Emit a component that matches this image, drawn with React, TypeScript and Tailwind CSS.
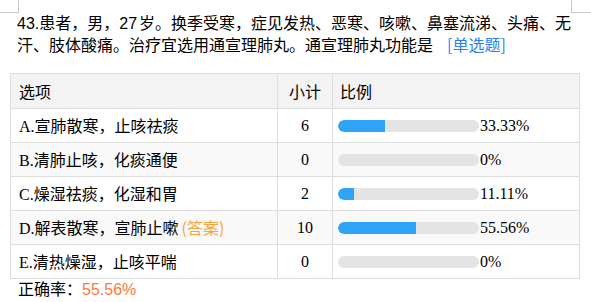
const rows = [
  { label: 'A.', text: '宣肺散寒，止咳祛痰', count: 6, pct: 33.33, answer: false },
  { label: 'B.', text: '清肺止咳，化痰通便', count: 0, pct: 0, answer: false },
  { label: 'C.', text: '燥湿祛痰，化湿和胃', count: 2, pct: 11.11, answer: false },
  { label: 'D.', text: '解表散寒，宣肺止嗽', count: 10, pct: 55.56, answer: true },
  { label: 'E.', text: '清热燥湿，止咳平喘', count: 0, pct: 0, answer: false },
];

const serif = "font-['Liberation_Serif','Noto_Sans_CJK_SC',serif]";
const cjk = "font-['Noto_Sans_CJK_SC','Liberation_Sans',sans-serif]";

export default function App() {
  return (
    <div className={`relative w-[591px] h-[302px] overflow-hidden bg-white text-black ${cjk}`}>
      {/* page corner marks */}
      <div className="absolute left-0 top-0 w-[19px] h-[13px] border-r border-b border-[#c8c8c8]" />
      <div className="absolute right-0 top-0 w-[20px] h-[13px] border-l border-b border-[#c8c8c8]" />

      <p className="pl-[17px] pt-[12px] w-[574px] text-[16px] leading-[21px]">
        <span className="font-['Liberation_Sans',sans-serif]">43.</span>患者，男，
        <span className="font-['Liberation_Sans',sans-serif] mr-[2px]">27</span>岁。换季受寒，症见发热、恶寒、咳嗽、鼻塞流涕、头痛、无汗、肢体酸痛。治疗宜选用通宣理肺丸。通宣理肺丸功能是
        <span className="ml-[14px] text-[#2a7ff5]">[单选题]</span>
      </p>

      <table className="mt-[18px] ml-[10px] w-[570px] table-fixed border-collapse text-[16px] leading-[21px]">
        <colgroup>
          <col className="w-[267px]" />
          <col className="w-[55px]" />
          <col />
        </colgroup>
        <thead>
          <tr className="h-[35px] bg-[#f3f3f3]">
            <th className="border border-[#dedede] pl-[8px] text-left font-normal">选项</th>
            <th className="border border-[#dedede] text-center font-normal">小计</th>
            <th className="border border-[#dedede] pl-[7px] text-left font-normal">比例</th>
          </tr>
        </thead>
        <tbody>
          {rows.map((r, i) => (
            <tr key={r.label} className={`h-[34px] ${i % 2 === 1 ? 'bg-[#f9f9f9]' : 'bg-white'}`}>
              <td className="border border-[#dedede] pl-[8px]">
                <span className={serif}>{r.label}</span>
                {r.text}
                {r.answer && <span className="ml-[3px] text-[#f3a63b]">(答案)</span>}
              </td>
              <td className={`border border-[#dedede] text-center ${serif}`}>{r.count}</td>
              <td className="border border-[#dedede] pl-[5px]">
                <div className="flex items-center">
                  <div className="w-[141px] h-[12px] rounded-full bg-[#e4e4e6] overflow-hidden">
                    <div className="h-full rounded-l-full bg-[#2ea3f7]" style={{ width: `${r.pct}%` }} />
                  </div>
                  <span className={`ml-[1px] ${serif}`}>{r.pct === 0 ? '0' : r.pct.toFixed(2)}%</span>
                </div>
              </td>
            </tr>
          ))}
        </tbody>
      </table>

      <p className="pl-[18px] -mt-[1px] text-[16px] leading-[21px]">
        正确率：<span className="font-['Liberation_Sans',sans-serif] text-[#fb7a3c]">55.56%</span>
      </p>
    </div>
  );
}
